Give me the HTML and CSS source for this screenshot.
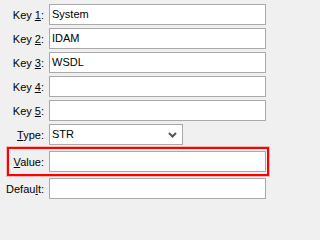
FILE: index.html
```html
<!DOCTYPE html>
<html>
<head>
<meta charset="utf-8">
<link rel="stylesheet" href="styles.css">
</head>
<body>
<div class="form">
  <div class="row"><label class="lbl">Key <u>1</u>:</label><div class="field">System</div></div>
  <div class="row"><label class="lbl">Key <u>2</u>:</label><div class="field">IDAM</div></div>
  <div class="row"><label class="lbl">Key <u>3</u>:</label><div class="field">WSDL</div></div>
  <div class="row"><label class="lbl">Key <u>4</u>:</label><div class="field"></div></div>
  <div class="row"><label class="lbl">Key <u>5</u>:</label><div class="field"></div></div>
  <div class="row row-select"><label class="lbl"><u>T</u>ype:</label>
    <div class="field select"><span>STR</span>
      <svg class="chev" width="9" height="6" viewBox="0 0 9 6"><path d="M1 1 L4.5 4.5 L8 1" fill="none" stroke="#555" stroke-width="2"/></svg>
    </div>
  </div>
  <div class="highlight">
    <div class="row row-inner"><label class="lbl"><u>V</u>alue:</label><div class="field"></div></div>
  </div>
  <div class="row"><label class="lbl">Defau<u>l</u>t:</label><div class="field"></div></div>
</div>
</body>
</html>
```
FILE: styles.css
```css
html, body {
  margin: 0;
  padding: 0;
  background: #f0f0f0;
}
body {
  width: 271px;
  height: 202px;
  overflow: hidden;
  font-family: "Liberation Sans", Arial, sans-serif;
  font-size: 11px;
  color: #000;
}
.form {
  padding-top: 4px;
  display: flex;
  flex-direction: column;
}
.row {
  display: flex;
  align-items: center;
  height: 21px;
  margin-bottom: 3px;
}
.lbl {
  width: 49px;
  flex: none;
  text-align: right;
  padding-right: 5px;
  box-sizing: border-box;
  white-space: nowrap;
}
.lbl u {
  text-decoration-thickness: 1px;
  text-underline-offset: 1px;
}
.field {
  box-sizing: border-box;
  width: 217px;
  flex: none;
  height: 21px;
  border: 1px solid #a9a9a9;
  background: #fff;
  padding: 0 2px;
  line-height: 19px;
}
.row-select {
  margin-bottom: 2px;
}
.select {
  width: 134px;
  display: flex;
  align-items: center;
  justify-content: space-between;
  padding-right: 5px;
}
.chev {
  display: block;
}
.highlight {
  margin: 0 2px 2px 7px;
  border: 2px solid #ff0000;
  box-shadow: 0 0 0 1px rgba(255, 80, 80, 0.35);
  padding: 2px 0;
}
.row-inner {
  margin-bottom: 0;
}
.row-inner .lbl {
  width: 40px;
}
```
